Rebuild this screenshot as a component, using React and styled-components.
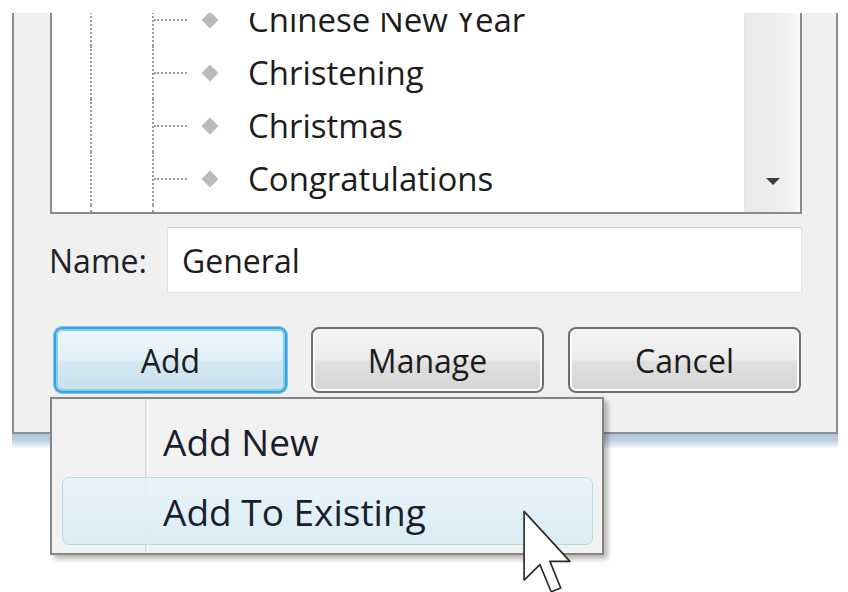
import React from "react";
import styled, { createGlobalStyle } from "styled-components";

const Global = createGlobalStyle`
  html, body {
    margin: 0;
    padding: 0;
    background: #fff;
  }
  body {
    font-family: "Open Sans", "Noto Sans", sans-serif;
    color: #1c1c1c;
  }
`;

const Page = styled.div`
  position: relative;
  width: 848px;
  height: 592px;
  box-sizing: border-box;
  padding: 13px 0 0 12px;
  overflow: hidden;
  background: #fff;
`;

const Dialog = styled.div`
  width: 826px;
  box-sizing: border-box;
  display: flex;
  flex-direction: column;
  padding: 0 34px 39px 36px;
  background: #f0f0f0;
  border: 2px solid #8d8d8d;
  border-top: none;
`;

const GlassEdge = styled.div`
  width: 826px;
  height: 14px;
  background: linear-gradient(to bottom, #adc3da 0%, #c3d4e6 50%, #e6edf5 85%, #fbfcfd 100%);
`;

const TreeBox = styled.div`
  height: 201px;
  box-sizing: border-box;
  display: flex;
  background: #fff;
  border: 2px solid #8a8a8a;
  border-top: none;
  overflow: hidden;
`;

const List = styled.div`
  flex: 1;
  display: flex;
  flex-direction: column;
  margin-top: -20px;
`;

const Row = styled.div`
  height: 53px;
  flex-shrink: 0;
  display: flex;
  align-items: center;
  padding-left: 38px;
`;

const Filler = styled.div`
  flex: 1;
  display: flex;
  padding-left: 38px;
`;

const Guide = styled.div`
  align-self: stretch;
  width: 62px;
  box-sizing: border-box;
  border-left: 2px dotted #9c9c9c;
`;

const Branch = styled.div`
  align-self: stretch;
  width: 47px;
  box-sizing: border-box;
  display: flex;
  align-items: center;
  border-left: 2px dotted #9c9c9c;
`;

const Stub = styled.span`
  width: 33px;
  border-top: 2px dotted #9c9c9c;
`;

const Diamond = styled.span`
  width: 12px;
  height: 12px;
  margin-left: 5px;
  background: #bababa;
  transform: rotate(45deg);
`;

const ItemText = styled.span`
  margin-left: 32px;
  font-size: 33px;
  line-height: 53px;
  white-space: nowrap;
  color: #1c1c1c;
`;

const ScrollBar = styled.div`
  width: 56px;
  box-sizing: border-box;
  display: flex;
  align-items: flex-end;
  justify-content: center;
  padding-bottom: 27px;
  background: linear-gradient(to right, #e9e9e9, #f1f1f1 80%, #fafafa);
  border-left: 1px solid #e4e4e4;
`;

const Arrow = styled.span`
  width: 0;
  height: 0;
  border-left: 7px solid transparent;
  border-right: 7px solid transparent;
  border-top: 7px solid #3b3b3b;
`;

const NameRow = styled.div`
  margin-top: 13px;
  display: flex;
  align-items: center;
`;

const NameLabel = styled.label`
  width: 118px;
  margin-left: -1px;
  font-size: 32px;
  color: #1f2229;
`;

const NameField = styled.input`
  flex: 1;
  height: 66px;
  box-sizing: border-box;
  padding: 0 0 0 14px;
  border: 1px solid #e3e3e3;
  border-top-color: #cfcfcf;
  background: #fff;
  font-family: inherit;
  font-size: 32px;
  color: #1c1c1c;
  outline: none;
`;

const ButtonRow = styled.div`
  margin-top: 34px;
  display: grid;
  grid-template-columns: repeat(3, 1fr);
  column-gap: 24px;
  padding: 0 1px 0 4px;
`;

const Button = styled.button`
  height: 66px;
  box-sizing: border-box;
  border-radius: 8px;
  font-family: inherit;
  font-size: 32px;
  color: #1c1c1c;
  padding: 0;
  border: 2px solid ${(p) => (p.$focused ? "#38a2da" : "#6e6e6e")};
  background: ${(p) =>
    p.$focused
      ? "linear-gradient(to bottom, #eef6fa 0%, #e3f0f7 50%, #d4e8f2 52%, #c9e1ee 100%)"
      : "linear-gradient(to bottom, #f4f4f4 0%, #ececec 50%, #e0e0e0 52%, #d5d5d5 100%)"};
  box-shadow: ${(p) =>
    p.$focused
      ? "0 0 0 1px #7cc6ea, inset 0 0 0 2px #86ccef"
      : "inset 0 0 0 2px #fbfbfb"};
`;

const Menu = styled.div`
  position: absolute;
  left: 50px;
  top: 397px;
  width: 554px;
  height: 158px;
  box-sizing: border-box;
  display: flex;
  flex-direction: column;
  gap: 2px;
  padding: 8px 9px 8px 10px;
  border: 2px solid #858585;
  background:
    linear-gradient(to right, transparent 93px, #e0e0e0 93px, #e0e0e0 95px, #fff 95px, #fff 96px, transparent 96px),
    #f1f1f1;
  box-shadow: 4px 4px 5px rgba(0, 0, 0, 0.28);
`;

const MenuItem = styled.div`
  height: 68px;
  box-sizing: border-box;
  display: flex;
  align-items: center;
  padding-left: 100px;
  border-radius: 7px;
  border: 1px solid ${(p) => (p.$active ? "#b4dcee" : "transparent")};
  background: ${(p) =>
    p.$active
      ? "linear-gradient(to bottom, rgba(232,244,251,0.8), rgba(214,235,246,0.85))"
      : "transparent"};
  font-size: 37px;
  color: #1a1e2c;
`;

const Pointer = styled.svg`
  position: absolute;
  left: 522px;
  top: 509px;
  width: 50px;
  height: 88px;
`;

const items = ["Chinese New Year", "Christening", "Christmas", "Congratulations"];

export default function App() {
  return (
    <Page>
      <Global />
      <Dialog>
        <TreeBox>
          <List>
            {items.map((label) => (
              <Row key={label}>
                <Guide />
                <Branch>
                  <Stub />
                </Branch>
                <Diamond />
                <ItemText>{label}</ItemText>
              </Row>
            ))}
            <Filler>
              <Guide />
              <Branch />
            </Filler>
          </List>
          <ScrollBar>
            <Arrow />
          </ScrollBar>
        </TreeBox>
        <NameRow>
          <NameLabel>Name:</NameLabel>
          <NameField defaultValue="General" readOnly />
        </NameRow>
        <ButtonRow>
          <Button $focused>Add</Button>
          <Button>Manage</Button>
          <Button>Cancel</Button>
        </ButtonRow>
      </Dialog>
      <GlassEdge />
      <Menu>
        <MenuItem>Add New</MenuItem>
        <MenuItem $active>Add To Existing</MenuItem>
      </Menu>
      <Pointer viewBox="0 0 12 21">
        <path
          d="M0.5 0.5 L0.5 17 L4.3 13.3 L7 19.8 L9.3 18.9 L6.7 12.5 L11.5 12.5 Z"
          fill="#fff"
          stroke="#2a2a2a"
          strokeWidth="0.4"
          strokeLinejoin="round"
        />
      </Pointer>
    </Page>
  );
}
